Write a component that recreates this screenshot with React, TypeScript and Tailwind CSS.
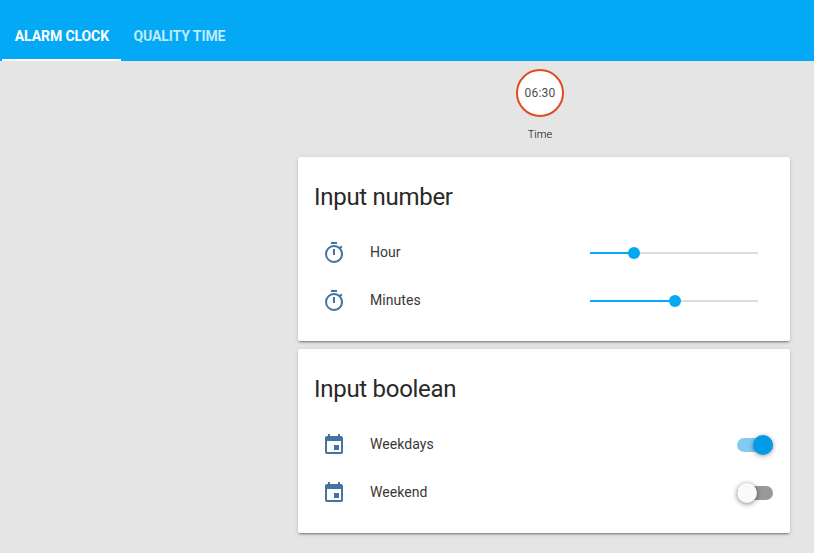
import React from "react";

const Timer = () => (
  <svg viewBox="0 0 24 24" className="size-6 fill-[#44739e]">
    <path d="M12,20A7,7 0 0,1 5,13A7,7 0 0,1 12,6A7,7 0 0,1 19,13A7,7 0 0,1 12,20M19.03,7.39L20.45,5.97C20,5.46 19.55,5 19.04,4.56L17.62,6C16.07,4.74 14.12,4 12,4A9,9 0 0,0 3,13A9,9 0 0,0 12,22C17,22 21,17.97 21,13C21,10.88 20.26,8.93 19.03,7.39M11,14H13V8H11M15,1H9V3H15V1Z" />
  </svg>
);

const Calendar = () => (
  <svg viewBox="0 0 24 24" className="size-6 fill-[#44739e]">
    <path d="M19,19H5V8H19M16,1V3H8V1H6V3H5C3.89,3 3,3.89 3,5V19A2,2 0 0,0 5,21H19A2,2 0 0,0 21,19V5C21,3.89 20.1,3 19,3H18V1M17,12H12V17H17V12Z" />
  </svg>
);

function Row({ icon, label, children }: { icon: React.ReactNode; label: string; children: React.ReactNode }) {
  return (
    <div className="flex h-10 items-center">
      <div className="flex w-10 justify-center">{icon}</div>
      <div className="ml-4 flex-1 pb-0.5 text-sm leading-5 tracking-[0.05px] text-[#383838]">{label}</div>
      {children}
    </div>
  );
}

function Slider({ value }: { value: number }) {
  return (
    <div className="relative mr-4 flex h-3 w-[168px] items-center">
      <div className="h-0.5 w-full bg-[#dedede]">
        <div className="h-0.5 bg-[#03a9f4]" style={{ width: value }} />
      </div>
      <div className="absolute top-0 size-3 rounded-full bg-[#03a9f4]" style={{ left: value - 6 }} />
    </div>
  );
}

function Toggle({ on }: { on: boolean }) {
  return (
    <div className="relative mr-px flex h-5 w-9 items-center">
      <div className={on ? "h-3.5 w-full rounded-full bg-[#81cbf1]" : "h-3.5 w-full rounded-full bg-[#999999]"} />
      <div
        className={
          on
            ? "absolute top-0 right-0 size-5 rounded-full bg-[#039be5] shadow-[0_1px_5px_rgba(0,0,0,0.4)]"
            : "absolute top-0 left-0 size-5 rounded-full bg-[#fafafa] shadow-[0_1px_5px_rgba(0,0,0,0.5)]"
        }
      />
    </div>
  );
}

function Card({ title, children }: { title: string; children: React.ReactNode }) {
  return (
    <section className="h-[184px] rounded-[2px] bg-white px-4 pt-5 shadow-[0_2px_2px_0_rgba(0,0,0,0.14),0_1px_5px_0_rgba(0,0,0,0.12),0_3px_1px_-2px_rgba(0,0,0,0.2)]">
      <h2 className="mb-4 h-10 text-2xl leading-10 tracking-[-0.29px] text-[#292929]">{title}</h2>
      <div className="flex flex-col gap-2">{children}</div>
    </section>
  );
}

export default function App() {
  return (
    <div className="h-[553px] w-[814px] overflow-hidden bg-[#e5e5e5] font-[Roboto,sans-serif] text-[#212121]">
      <nav className="flex h-[61px] items-end bg-[#03a9f4] pl-[2.4px] text-sm font-bold tracking-[-0.1px] text-white">
        <div className="flex h-12 w-[119px] items-center justify-center border-b-2 border-white">ALARM CLOCK</div>
        <div className="flex h-12 w-[116px] items-center justify-center border-b-2 border-transparent text-white/75">QUALITY TIME</div>
      </nav>
      <main className="ml-[298px] w-[492px]">
        <div className="flex h-24 flex-col items-center pt-2 pr-2">
          <div className="flex size-12 items-center justify-center rounded-full border-2 border-[#df4c1e] bg-white text-xs tracking-[0.2px] text-[#505050]">06:30</div>
          <div className="mt-[9px] text-[11px] leading-[18px] font-light text-black">Time</div>
        </div>
        <div className="flex flex-col gap-2">
          <Card title="Input number">
            <Row icon={<Timer />} label="Hour"><Slider value={44} /></Row>
            <Row icon={<Timer />} label="Minutes"><Slider value={85} /></Row>
          </Card>
          <Card title="Input boolean">
            <Row icon={<Calendar />} label="Weekdays"><Toggle on /></Row>
            <Row icon={<Calendar />} label="Weekend"><Toggle on={false} /></Row>
          </Card>
        </div>
      </main>
    </div>
  );
}
